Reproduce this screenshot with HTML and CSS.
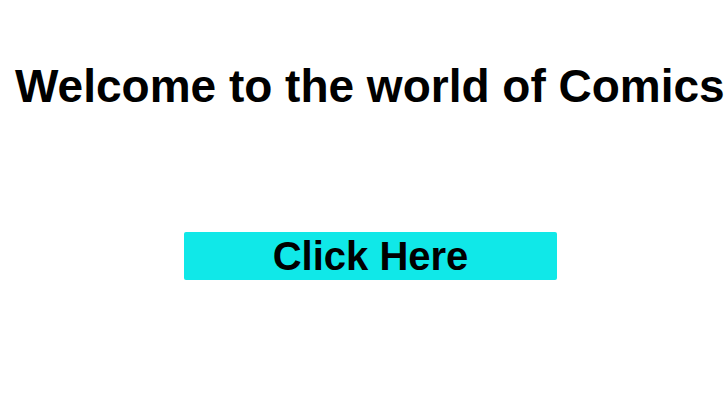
FILE: index.html
```html
<!DOCTYPE html>
<html>
<head>
<meta charset="utf-8">
<link rel="stylesheet" href="styles.css">
</head>
<body>
<div class="page">
  <h1 class="title">Welcome to the world of Comics</h1>
  <div class="actions">
    <button class="cta">Click Here</button>
  </div>
</div>
</body>
</html>
```
FILE: styles.css
```css
html, body {
  margin: 0;
  padding: 0;
  background: #ffffff;
}
.page {
  font-family: "Liberation Sans", Arial, sans-serif;
  padding: 60px 0 0 15px;
  white-space: nowrap;
}
.title {
  margin: 0;
  font-size: 46px;
  font-weight: bold;
  line-height: 52px;
  color: #000;
}
.actions {
  padding: 120px 0 0 169px;
}
.cta {
  display: block;
  width: 373px;
  height: 48px;
  border: none;
  border-radius: 2px;
  background: #10e8e8;
  color: #000;
  font-family: "Liberation Sans", Arial, sans-serif;
  font-weight: bold;
  font-size: 40px;
  padding: 0;
}
```
